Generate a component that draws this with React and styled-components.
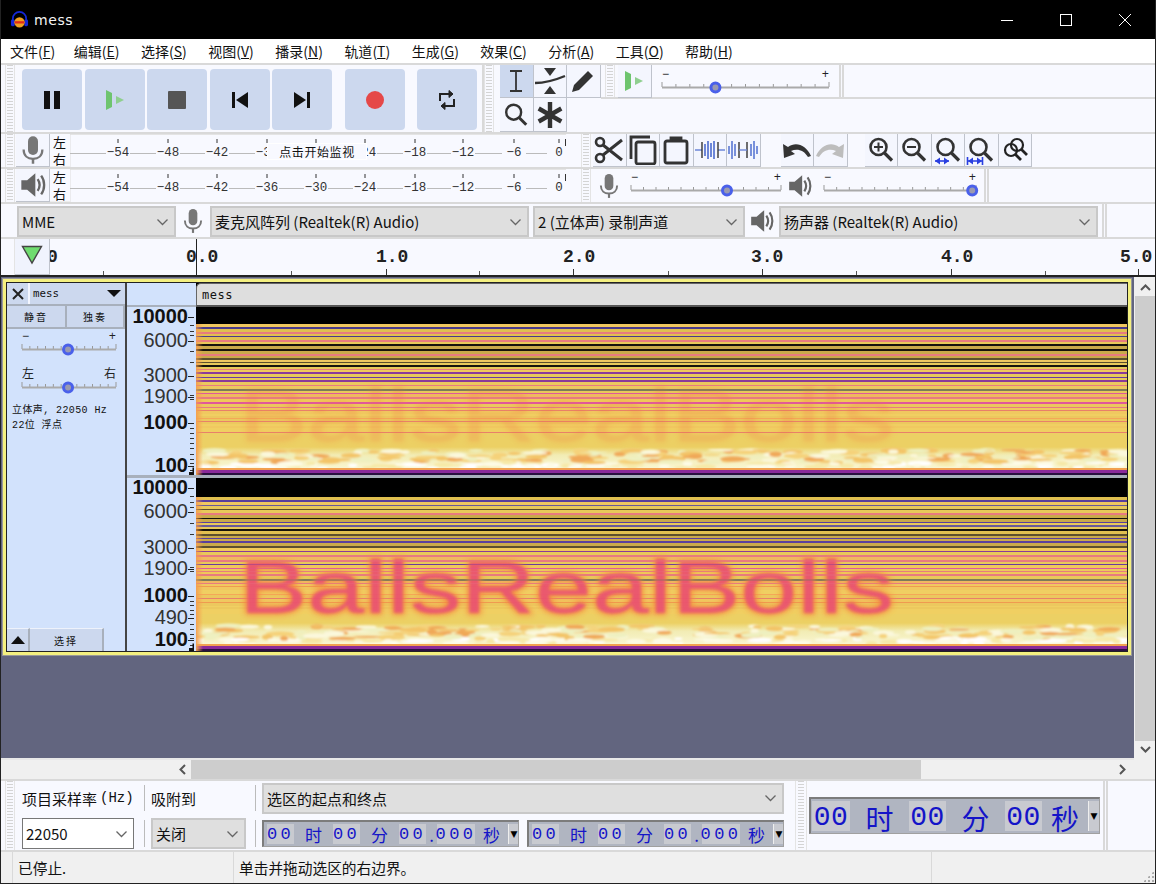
import React from 'react';
import styled, { createGlobalStyle } from 'styled-components';

const CJK = '"Noto Sans CJK SC", "Liberation Sans", sans-serif';
const MONO = '"Liberation Mono", "Noto Sans CJK SC", monospace';
const BAR = '#f8f9ff';
const LINE = '#d9d9d9';

const GlobalStyle = createGlobalStyle`
  html, body { margin: 0; padding: 0; background: #000; }
  * { box-sizing: border-box; }
  body { font-family: ${CJK}; color: #111; }
`;

const Frame = styled.div`
  width: 1156px;
  height: 884px;
  display: flex;
  flex-direction: column;
  border: 1px solid #222;
  border-top: 0;
  background: #f0f0f0;
  overflow: hidden;
`;
const TitleBar = styled.div`
  height: 39px;
  background: #000;
  color: #f4f4f4;
  display: flex;
  align-items: center;
  padding-left: 9px;
  font-size: 14px;
  letter-spacing: 0.6px;
  font-family: "DejaVu Sans", sans-serif;
  gap: 5px;
`;
const WinControls = styled.div`
  margin-left: auto;
  margin-right: 1px;
  display: flex;
  height: 100%;
`;
const WinButton = styled.div`
  width: 59px;
  display: flex;
  align-items: center;
  justify-content: center;
`;
const MenuBar = styled.div`
  height: 26px;
  background: #fff;
  border-bottom: 2px solid ${LINE};
  display: flex;
  align-items: center;
  gap: 21.5px;
  padding-left: 9px;
  font-size: 14px;
  line-height: 24px;
  & > span:first-child { margin-right: -3px; }
`;
const Mnemonic = styled.span`
  text-decoration: underline;
`;
const Row = styled.div`
  display: flex;
  height: ${p => p.$h}px;
  background: ${BAR};
  border-bottom: 2px solid ${LINE};
`;
const Gripper = styled.div`
  width: ${p => p.$w || 10}px;
  margin-left: ${p => p.$ml || 0}px;
  flex: none;
  border-left: 1px solid #e4e4e4;
  border-right: 1px solid #e4e4e4;
  background: repeating-linear-gradient(to bottom, #d4d4d4 0 1px, transparent 1px 3px) center / 6px 100% no-repeat;
`;
const Transport = styled.div`
  width: 469px;
  flex: none;
  display: flex;
  padding-left: 3px;
  gap: 2.5px;
  border-right: 2px solid ${LINE};
`;
const TransportButton = styled.div`
  width: 60px;
  height: 61px;
  flex: none;
  margin: 4px 0 0 ${p => p.$ml || 0}px;
  border-radius: 4px;
  background: #ccd8ee;
  display: flex;
  align-items: center;
  justify-content: center;
`;
const ToolGrid = styled.div`
  width: 100.5px;
  flex: none;
  display: grid;
  grid-template-columns: repeat(3, 33.5px);
  grid-template-rows: 33px 34px;
  margin-left: 6px;
`;
const ToolBtn = styled.div`
  width: ${p => p.$w || 33.5}px;
  height: ${p => p.$h || 33}px;
  flex: none;
  background: ${p => (p.$on ? '#ccd8ee' : '#f4f6fe')};
  border-right: 1px solid #bfc3cc;
  border-bottom: 1px solid #bfc3cc;
  display: flex;
  align-items: center;
  justify-content: center;
  margin-left: ${p => p.$ml || 0}px;
`;
const TopRight = styled.div`
  flex: 1;
  display: flex;
  flex-direction: column;
`;
const SpeedBar = styled.div`
  height: 34px;
  display: flex;
  border-bottom: 2px solid ${LINE};
  padding-left: 4px;
`;
const DoubleLine = styled.div`
  width: 5px;
  flex: none;
  border-left: 2px solid ${LINE};
  border-right: 2px solid ${LINE};
  margin-left: ${p => p.$ml || 0}px;
`;
const SliderSvg = styled.svg`
  display: block;
  flex: none;
  overflow: visible;
  margin: ${p => p.$m || '0'};
`;
const MeterBar = styled.div`
  width: 566px;
  flex: none;
  display: flex;
  padding-left: 1px;
  position: relative;
`;
const MeterMark = styled.div`
  width: 20px;
  flex: none;
  font-size: 13px;
  line-height: 16.5px;
  padding: 0 0 0 3px;
  border-bottom: 1px solid #eee;
`;
const Tooltip = styled.div`
  position: absolute;
  left: 252px;
  top: 9px;
  width: 100px;
  height: 17px;
  background: ${BAR};
  border: 1px solid #fff;
  font-size: 12px;
  line-height: 15px;
  text-align: center;
  letter-spacing: 0.6px;
`;
const IconSlot = styled.div`
  width: ${p => p.$w}px;
  flex: none;
  display: flex;
  align-items: center;
  justify-content: center;
  margin-left: ${p => p.$ml || 0}px;
`;
const DeviceSelect = styled.div`
  width: ${p => p.$w}px;
  height: ${p => p.$h || 31}px;
  flex: none;
  margin: ${p => p.$m || '2px 0 0 0'};
  background: ${p => (p.$white ? '#fff' : '#dfdfdf')};
  border: ${p => (p.$white ? '1px solid #777' : '2px solid #c8c8c8')};
  display: flex;
  align-items: center;
  justify-content: space-between;
  padding: 0 5px 0 3px;
  font-size: 15px;
  white-space: nowrap;
`;
const RulerRow = styled.div`
  height: 36px;
  display: flex;
  background: ${BAR};
`;
const RulerGutter = styled.div`
  width: 14px;
  flex: none;
  border-right: 1px solid #e4e4e4;
`;
const PlayHeadButton = styled.div`
  width: 35px;
  height: 36px;
  flex: none;
  background: #f0f3fd;
  border-right: 1px solid #bfc3cc;
  border-bottom: 1px solid #bfc3cc;
  display: flex;
  align-items: center;
  justify-content: center;
  padding-bottom: 3px;
`;
const TrackArea = styled.div`
  height: 485px;
  display: flex;
  border-top: 2px solid #222;
  flex: none;
`;
const TrackBackdrop = styled.div`
  width: 1133px;
  flex: none;
  background: #62657f;
  padding: 2px 0 0 2px;
  border-bottom: 2px solid #e8e8e8;
`;
const TrackFrame = styled.div`
  width: 1128px;
  height: 376px;
  border: 3px solid #f4f080;
  box-shadow: 0 0 0 1px #999;
  background: #222;
  padding: 1px;
  display: flex;
`;
const ControlPanel = styled.div`
  width: 120px;
  flex: none;
  background: #d2e2fc;
  border-right: 2px solid #444;
  display: flex;
  flex-direction: column;
`;
const PanelHead = styled.div`
  display: flex;
  height: 23px;
  flex: none;
  border-bottom: 2px solid #a8b0bc;
`;
const CloseBtn = styled.div`
  width: 23px;
  background: #ccd8ee;
  border-right: 2px solid #f4f6ff;
  display: flex;
  align-items: center;
  justify-content: center;
`;
const NameDrop = styled.div`
  flex: 1;
  background: #ccd8ee;
  font: 10.8px "DejaVu Sans Mono", monospace;
  padding: 0 3px 0 3px;
  display: flex;
  align-items: center;
  justify-content: space-between;
`;
const PanelBtnRow = styled.div`
  display: flex;
  height: 23px;
  flex: none;
  border-bottom: 2px solid #a8b0bc;
`;
const PanelBtn = styled.div`
  width: ${p => (p.$w ? `${p.$w}px` : 'auto')};
  flex: ${p => (p.$w ? 'none' : 1)};
  background: #ccd8ee;
  border-right: 2px solid #a8b0bc;
  font-size: 10px;
  display: flex;
  align-items: center;
  justify-content: center;
  letter-spacing: 2px;
`;
const InfoText = styled.div`
  font: 10px/15px ${MONO};
  letter-spacing: 0.4px;
  margin: 9px 0 0 5px;
  white-space: pre;
`;
const PanelFooter = styled.div`
  margin-top: auto;
  display: flex;
  height: 23px;
  flex: none;
`;
const FooterBtn = styled.div`
  width: ${p => p.$w}px;
  flex: none;
  background: #ccd8ee;
  border-top: 1px solid #eef2fb;
  border-right: 2px solid #a8b0bc;
  font-size: 10px;
  letter-spacing: 2px;
  display: flex;
  align-items: center;
  justify-content: center;
`;
const ScaleColumn = styled.div`
  width: 69px;
  flex: none;
  background: #d2e2fc;
  display: flex;
  flex-direction: column;
`;
const ScaleHead = styled.div`
  height: 24px;
  flex: none;
  border-bottom: 2px solid #a8b0bc;
`;
const ScaleGap = styled.div`
  height: 3px;
  flex: none;
  background: #a8b0bc;
`;
const WaveColumn = styled.div`
  flex: 1;
  min-width: 0;
  display: flex;
  flex-direction: column;
  background: #000;
`;
const WaveTitle = styled.div`
  height: 24px;
  flex: none;
  background: #dedede;
  border-radius: 5px 0 0 0;
  border-top: 1px solid #666;
  border-left: 1px solid #666;
  border-bottom: 2px solid #555;
  font: 12px "DejaVu Sans Mono", monospace;
  letter-spacing: 0.5px;
  padding: 4px 0 0 5px;
`;
const Ghost = styled.g`
  opacity: ${p => p.$a};
`;
const VScroll = styled.div`
  flex: 1;
  background: #f0f0f0;
  display: flex;
  flex-direction: column;
  align-items: center;
  padding: 2px 1px;
`;
const ScrollThumb = styled.div`
  background: #cdcdcd;
  flex: ${p => (p.$w ? 'none' : 1)};
  width: ${p => (p.$w ? `${p.$w}px` : '100%')};
  height: ${p => (p.$w ? '100%' : 'auto')};
`;
const ScrollArrow = styled.div`
  width: ${p => p.$w || 20}px;
  height: ${p => p.$h || 17}px;
  flex: none;
  display: flex;
  align-items: center;
  justify-content: center;
`;
const HScroll = styled.div`
  height: 21px;
  flex: none;
  background: #f0f0f0;
  display: flex;
  padding-left: 172px;
  border-bottom: 2px solid ${LINE};
`;
const HSpacer = styled.div`
  flex: 1;
`;
const SelectionBar = styled.div`
  height: 71px;
  flex: none;
  background: ${BAR};
  border-bottom: 2px solid ${LINE};
  display: flex;
`;
const SelectionGrid = styled.div`
  display: grid;
  grid-template-columns: 122px 111px 530px;
  grid-template-rows: 32px 33px;
  row-gap: 3px;
  margin-left: 7px;
  padding-top: 1px;
  flex: none;
`;
const SelCell = styled.div`
  display: flex;
  align-items: center;
  font-size: 15px;
  white-space: nowrap;
  position: relative;
  padding-left: ${p => p.$pad || 0}px;
`;
const HzMark = styled.span`
  font: 14px ${MONO};
  margin-left: 3px;
`;
const SelDivider = styled.div`
  position: absolute;
  left: 0;
  top: 3px;
  bottom: 3px;
  border-left: 1px solid #bbb;
`;
const TimeBox = styled.div`
  width: ${p => p.$w}px;
  height: ${p => p.$h}px;
  flex: none;
  margin-left: ${p => p.$ml || 0}px;
  background: #b0b5c1;
  border: 1px solid #a0a0a0;
  border-top: 2px solid #7c7c7c;
  border-left: 2px solid #7c7c7c;
  display: flex;
  align-items: center;
  color: #1414c8;
  font-family: ${MONO};
  font-size: ${p => p.$fs}px;
  padding: 2px 0;
  overflow: hidden;
`;
const TimeDigits = styled.span`
  width: ${p => p.$w}px;
  height: 100%;
  flex: none;
  background: #c8cad0;
  display: flex;
  align-items: center;
  justify-content: center;
  padding-top: ${p => p.$dy || 0}px;
  letter-spacing: ${p => p.$ls ?? 3.4}px;
`;
const TimeUnit = styled.span`
  width: ${p => p.$w}px;
  flex: none;
  text-align: center;
  padding-top: ${p => p.$dy || 0}px;
  font-family: ${CJK};
`;
const TimeMenu = styled.span`
  margin-left: auto;
  width: 11px;
  height: 100%;
  flex: none;
  background: #c8cad0;
  border-left: 1px solid #eee;
  display: flex;
  align-items: center;
  justify-content: center;
  color: #000;
  font-size: 9px;
  font-family: "DejaVu Sans", sans-serif;
`;
const ClockHolder = styled.div`
  width: 296px;
  flex: none;
  display: flex;
  align-items: center;
  padding: 0 0 0 2px;
`;
const StatusBar = styled.div`
  flex: 1;
  display: flex;
  font-size: 14.7px;
  position: relative;
`;
const StatusCell = styled.div`
  width: ${p => p.$w}px;
  flex: none;
  margin-left: ${p => p.$ml || 0}px;
  border-left: 1px solid ${LINE};
  padding: 5px 0 0 ${p => p.$pad || 5}px;
  white-space: nowrap;
`;
const Resize = styled.div`
  position: absolute;
  right: 1px;
  bottom: 1px;
  width: 11px;
  height: 11px;
  background: radial-gradient(circle, #aaa 1.2px, transparent 1.4px) 0 0 / 4px 4px;
  clip-path: polygon(100% 0, 100% 100%, 0 100%);
`;

// --- small drawings ---
const Mic = ({ s = 30, c = '#777' }) => (
  <svg width={s} height={s} viewBox="0 0 24 24" fill="none">
    <rect x="8" y="1" width="8" height="15" rx="4" fill={c} />
    <path d="M4.5 11.5c0 5 3.2 7.5 7.5 7.5s7.5-2.5 7.5-7.5" stroke={c} strokeWidth="1.8" />
    <path d="M12 19v4" stroke={c} strokeWidth="2" />
  </svg>
);
const Speaker = ({ s = 28, c = '#666' }) => (
  <svg width={s} height={s} viewBox="0 0 24 24" fill="none">
    <path d="M2 8h5l7-6v20l-7-6H2z" fill={c} />
    <path d="M16 7c2 3 2 7 0 10" stroke={c} strokeWidth="2" />
    <path d="M19 4c3.4 4.6 3.4 11.4 0 16" stroke={c} strokeWidth="2" />
  </svg>
);
const GreenPlay = () => (
  <svg width="24" height="24" viewBox="0 0 24 24">
    <path d="M3 2l6 3v14l-6 3z" fill="#6ec46e" />
    <path d="M13 8l8 4-8 4z" fill="#8fcf8f" />
  </svg>
);
const Magnifier = ({ children, s = 30, w = 2.6 }) => (
  <svg width={s} height={s} viewBox="0 0 30 30" fill="none" stroke="#333" strokeWidth={w}>
    <circle cx="12.5" cy="12" r="8" />
    <path d="M18.5 18l7.5 7.5" strokeWidth={w + 0.6} />
    {children}
  </svg>
);

const Slider = ({ w, pos, lo = '−', hi = '+', h = 28, m, font = MONO }) => {
  const x = 4 + (w - 8) * pos;
  const ticks = Array.from({ length: 13 }, (_, i) => 4 + ((w - 8) * i) / 12);
  return (
    <SliderSvg width={w} height={h} viewBox={`0 0 ${w} ${h}`} $m={m}>
      <text x="4" y="12" fontSize="12" fontFamily={font} fill="#222">{lo}</text>
      <text x={w - 4} y="12" fontSize="12" fontFamily={font} fill="#222" textAnchor="end">{hi}</text>
      {ticks.map((t, i) => (
        <line key={i} x1={t} x2={t} y1={i === 0 || i === 12 ? 16 : 18} y2="21" stroke="#999" />
      ))}
      <line x1="4" x2={w - 4} y1="21.5" y2="21.5" stroke="#aaa" strokeWidth="2" />
      <circle cx={x} cy="21.5" r="4.5" fill="#9a9ab0" stroke="#4a60ea" strokeWidth="3" />
    </SliderSvg>
  );
};

const METER_TICKS = [
  ['−54', 48], ['−48', 98], ['−42', 147], ['−36', 197], ['−30', 246],
  ['−24', 295], ['−18', 345], ['−12', 393], ['−6', 444], ['0', 489],
];
const MeterScale = () => (
  <svg width="497" height="33" viewBox="0 0 497 33">
    <line x1="0" x2="496" y1="0.5" y2="0.5" stroke="#e4e4e4" />
    <line x1="0" x2="0" y1="0" y2="33" stroke="#ddd" />
    <line x1="0" x2="496" y1="19.5" y2="19.5" stroke="#bbb" />
    {METER_TICKS.map(([t, x]) => (
      <g key={t}>
        <rect x={x - 12} y="8" width="24" height="17" fill={BAR} />
        <line x1={x} x2={x} y1="5" y2="9" stroke="#333" />
        <text x={x} y="22" fontSize="12.5" fontFamily={MONO} textAnchor="middle" fill="#333">{t}</text>
      </g>
    ))}
    <line x1="495.5" x2="495.5" y1="5" y2="12" stroke="#333" />
  </svg>
);

// --- spectrogram ---
const rng = seed => () => {
  seed = (seed + 0x6d2b79f5) | 0;
  let t = Math.imul(seed ^ (seed >>> 15), 1 | seed);
  t = (t + Math.imul(t ^ (t >>> 7), 61 | t)) ^ t;
  return ((t ^ (t >>> 14)) >>> 0) / 4294967296;
};
const BANDS = [
  { light: ['#e8c95a', '#c9a94a', '#e0c050', '#f0c860'], accent: ['#5c4f2e', '#5a3f9e', '#17140c', '#17140c', '#6a5a9a', '#e87a80', '#4a3a8c'] },
  { light: ['#f0c85a', '#ecc85e', '#f0b860', '#e8c95a'], accent: ['#e87a80', '#8a3a9a', '#c8488a', '#7f7a5a', '#e0589a', '#6a3aa0'] },
  { light: ['#f0cf62', '#ecc85e', '#f0c860'], accent: ['#f4a858', '#f09a50', '#e8806a', '#f0cf62'] },
];
const pick = (r, list) => list[Math.floor(r() * list.length)];

const makeStripes = (seed, top, end) => {
  const r = rng(seed);
  const out = [];
  let y = top;
  while (y < end) {
    const t = (y - top) / (end - top);
    const band = BANDS[t < 0.42 ? 0 : t < 0.74 ? 1 : 2];
    const a = 2 + Math.floor(r() * 2);
    const b = 1 + Math.floor(r() * 2);
    out.push({ y, h: a, c: pick(r, band.light) });
    out.push({ y: y + a, h: b, c: pick(r, band.accent), accent: t < 0.74 });
    y += a + b;
  }
  return out;
};

const makeBlobs = (seed, top, bottom) => {
  const r = rng(seed);
  return Array.from({ length: 320 }, () => {
    const y = top + r() * (bottom - top);
    const low = (y - top) / (bottom - top);
    return {
      x: r() * 931,
      y,
      rx: 4 + r() * 10,
      ry: 1 + r() * 1.8,
      c: low > 0.7 ? pick(r, ['#ffffff', '#fdfbe6', '#f6e9a8']) : pick(r, ['#f3c468', '#f5d27a', '#fbf8dc', '#eef0c0', '#f0a858']),
    };
  });
};

const Channel = ({ id, h, top, end, mottle, ghost, baseline, core }) => {
  const stripes = makeStripes(id * 97 + 5, top, end);
  const blobs = makeBlobs(id * 31 + 2, mottle + 3, h - 7);
  return (
    <svg width="931" height={h} viewBox={`0 0 931 ${h}`}>
      <defs>
        <filter id={`soft${id}`}><feGaussianBlur stdDeviation="1.4" /></filter>
        <filter id={`glow${id}`}><feGaussianBlur stdDeviation="3.4" /></filter>
        <filter id={`mot${id}`}><feGaussianBlur stdDeviation="0.8" /></filter>
        <linearGradient id={`base${id}`} x1="0" x2="0" y1="0" y2="1">
          <stop offset="0" stopColor="#ecd064" />
          <stop offset="0.35" stopColor="#f2ecb4" />
          <stop offset="1" stopColor="#faf7d4" />
        </linearGradient>
        <linearGradient id={`edge${id}`} x1="0" x2="1" y1="0" y2="0">
          <stop offset="0" stopColor="#f4a050" />
          <stop offset="1" stopColor="#f4a050" stopOpacity="0" />
        </linearGradient>
      </defs>
      <rect width="931" height={h} fill="#000" />
      <rect y={top} width="931" height={h - top} fill="#ecd064" />
      {stripes.map((s, i) => <rect key={i} y={s.y} width="931" height={s.h} fill={s.c} />)}
      <rect y={mottle} width="931" height={h - mottle - 5} fill={`url(#base${id})`} />
      <g filter={`url(#mot${id})`}>
        {blobs.map((b, i) => <ellipse key={i} cx={b.x} cy={b.y} rx={b.rx} ry={b.ry} fill={b.c} />)}
      </g>
      <rect y={h - 7} width="931" height="2" fill="#f2a050" />
      <rect y={h - 5} width="931" height="3" fill="#8a2a9a" />
      <rect y={h - 2} width="931" height="2" fill="#2a1040" />
      <rect y={top} width="7" height={h - top} fill={`url(#edge${id})`} />
      <Ghost $a={ghost}>
        <text x="43" y={baseline} fontFamily="Liberation Sans, sans-serif" fontSize="75" textLength="655"
          lengthAdjust="spacingAndGlyphs" fill="#f58a3c" stroke="#f58a3c" strokeWidth="3" filter={`url(#glow${id})`}>
          BallsRealBolls
        </text>
        <text x="43" y={baseline} fontFamily="Liberation Sans, sans-serif" fontSize="75" textLength="655"
          lengthAdjust="spacingAndGlyphs" fill={core} filter={`url(#soft${id})`} opacity="0.85">
          BallsRealBolls
        </text>
      </Ghost>
      {stripes.filter(s => s.accent).map((s, i) => (
        <rect key={i} y={s.y} width="931" height={s.h} fill={s.c} opacity="0.3" />
      ))}
    </svg>
  );
};

const FreqScale = ({ h, labels, ticks }) => (
  <svg width="67" height={h} viewBox={`0 0 67 ${h}`}>
    {labels.map(([t, y, b]) => (
      <g key={t}>
        <text x="61" y={y + 5.5} textAnchor="end" fontSize="20" fontWeight={b ? 700 : 400}
          fontFamily="Liberation Sans, sans-serif" fill={b ? '#111' : '#333'}>{t}</text>
        <line x1="61" x2="67" y1={y + 0.5} y2={y + 0.5} stroke="#222" />
      </g>
    ))}
    {ticks.map(y => <line key={y} x1="63" x2="67" y1={y + 0.5} y2={y + 0.5} stroke="#333" />)}
    <path d={`M62 ${h - 1.5}h5v-6`} stroke="#111" strokeWidth="3" fill="none" />
  </svg>
);

const Caret = ({ c = '#666' }) => (
  <svg width="13" height="8" viewBox="0 0 13 8" fill="none">
    <path d="M1.5 1.5l5 5 5-5" stroke={c} strokeWidth="1.3" />
  </svg>
);

const MENUS = [
  ['文件', 'F'], ['编辑', 'E'], ['选择', 'S'], ['视图', 'V'], ['播录', 'N'], ['轨道', 'T'],
  ['生成', 'G'], ['效果', 'C'], ['分析', 'A'], ['工具', 'O'], ['帮助', 'H'],
];

const RULER = [
  ['0', -3], ['0.0', 136], ['1.0', 326], ['2.0', 513], ['3.0', 701], ['4.0', 891], ['5.0', 1070],
];

const Time = ({ w, h, fs, parts, ml, dy }) => (
  <TimeBox $w={w} $h={h} $fs={fs} $ml={ml}>
    {parts.map((p, i) => (p.d
      ? <TimeDigits key={i} $w={p.w} $ls={p.ls} $dy={dy}>{p.d}</TimeDigits>
      : <TimeUnit key={i} $w={p.w} $dy={dy}>{p.u}</TimeUnit>))}
    <TimeMenu>▼</TimeMenu>
  </TimeBox>
);

const SMALL_TIME = [
  { u: '', w: 3 }, { d: '00', w: 27 }, { u: '时', w: 39 }, { d: '00', w: 27 }, { u: '分', w: 39 },
  { d: '00', w: 27 }, { u: '.', w: 11 }, { d: '000', w: 38 }, { u: '秒', w: 33 },
];
const BIG_TIME = [
  { u: '', w: 1 }, { d: '00', w: 38, ls: 0.5 }, { u: '时', w: 59 }, { d: '00', w: 37, ls: 0.5 },
  { u: '分', w: 59 }, { d: '00', w: 37, ls: 0.5 }, { u: '秒', w: 46 },
];

export default function App() {
  return (
    <>
      <GlobalStyle />
      <Frame>
        <TitleBar>
          <svg width="19" height="19" viewBox="0 0 20 20" fill="none">
            <path d="M3 12V9a7 7 0 0114 0v3" stroke="#1428d8" strokeWidth="1.8" />
            <rect x="1" y="10" width="4" height="7" rx="1.5" fill="#1428d8" />
            <rect x="15" y="10" width="4" height="7" rx="1.5" fill="#1428d8" />
            <circle cx="10" cy="13" r="5.5" fill="#f0a020" />
            <path d="M5 13h10" stroke="#e02818" strokeWidth="2.4" />
          </svg>
          mess
          <WinControls>
            <WinButton>
              <svg width="12" height="12"><path d="M0 6.5h12" stroke="#fff" /></svg>
            </WinButton>
            <WinButton>
              <svg width="12" height="12"><rect x="0.5" y="0.5" width="11" height="11" fill="none" stroke="#fff" /></svg>
            </WinButton>
            <WinButton>
              <svg width="12" height="12"><path d="M0 0l12 12M12 0L0 12" stroke="#fff" /></svg>
            </WinButton>
          </WinControls>
        </TitleBar>

        <MenuBar>
          {MENUS.map(([label, key]) => (
            <span key={key}>{label}(<Mnemonic>{key}</Mnemonic>)</span>
          ))}
        </MenuBar>

        <Row $h={69}>
          <Gripper $ml={4} />
          <Transport>
            <TransportButton $ml={4}>
              <svg width="20" height="20"><path d="M2 1h6v18H2zM12 1h6v18h-6z" fill="#111" /></svg>
            </TransportButton>
            <TransportButton><GreenPlay /></TransportButton>
            <TransportButton>
              <svg width="18" height="18"><rect width="18" height="18" fill="#555" rx="1" /></svg>
            </TransportButton>
            <TransportButton>
              <svg width="18" height="18"><path d="M1 1h3v16H1zM17 1v16L5 9z" fill="#111" /></svg>
            </TransportButton>
            <TransportButton>
              <svg width="18" height="18"><path d="M14 1h3v16h-3zM1 1v16l12-8z" fill="#111" /></svg>
            </TransportButton>
            <TransportButton $ml={10.5}>
              <svg width="18" height="18"><circle cx="9" cy="9" r="9" fill="#e54848" /></svg>
            </TransportButton>
            <TransportButton $ml={9.5}>
              <svg width="20" height="22" viewBox="0 0 20 22" fill="none" stroke="#222" strokeWidth="2">
                <path d="M3 12V5h12" /><path d="M17 10v7H5" />
                <path d="M12 1.5L16 5l-4 3.5z" fill="#222" strokeWidth="1" />
                <path d="M8 13.5L4 17l4 3.5z" fill="#222" strokeWidth="1" />
              </svg>
            </TransportButton>
          </Transport>
          <Gripper />
          <ToolGrid>
            <ToolBtn $on>
              <svg width="16" height="24" fill="none" stroke="#333" strokeWidth="1.8"><path d="M2 2h12M8 2v20M2 22h12" /></svg>
            </ToolBtn>
            <ToolBtn>
              <svg width="32" height="28" viewBox="0 0 32 28">
                <path d="M10 1h12l-6 8zM10 27h12l-6-8z" fill="#333" />
                <path d="M1 16c10 0 18-2 30-7" stroke="#333" strokeWidth="2.4" fill="none" />
              </svg>
            </ToolBtn>
            <ToolBtn>
              <svg width="26" height="26" viewBox="0 0 26 26">
                <path d="M2 24l2-7L18 3l5 5L9 22z" fill="#333" />
              </svg>
            </ToolBtn>
            <ToolBtn $h={34}><Magnifier s={28} /></ToolBtn>
            <ToolBtn $h={34}>
              <svg width="28" height="28" viewBox="0 0 28 28" stroke="#333" strokeWidth="4.4">
                <path d="M14 1v26M2.7 7.5l22.6 13M2.7 20.5l22.6-13" />
              </svg>
            </ToolBtn>
          </ToolGrid>
          <TopRight>
            <SpeedBar>
              <Gripper />
              <ToolBtn $w={34} $ml={3}><GreenPlay /></ToolBtn>
              <Slider w={175} pos={0.32} m="1px 0 0 6px" />
              <DoubleLine $ml={6} />
            </SpeedBar>
          </TopRight>
        </Row>

        <Row $h={35}>
          <Gripper $ml={4} />
          <MeterBar>
            <ToolBtn $w={34} $h={33}><Mic /></ToolBtn>
            <MeterMark>左<br />右</MeterMark>
            <MeterScale />
            <Tooltip>点击开始监视</Tooltip>
          </MeterBar>
          <Gripper />
          <ToolBtn $ml={2}>
            <svg width="30" height="30" viewBox="0 0 30 30" fill="none" stroke="#333" strokeWidth="2.6">
              <circle cx="6" cy="7" r="4" /><circle cx="6" cy="23" r="4" />
              <path d="M9 10l19 15M9 20L28 5" strokeWidth="3" />
            </svg>
          </ToolBtn>
          <ToolBtn>
            <svg width="28" height="30" viewBox="0 0 28 30" fill="none" stroke="#333" strokeWidth="2.8">
              <path d="M21 2H2v22" /><rect x="7" y="7" width="19" height="22" rx="2" />
            </svg>
          </ToolBtn>
          <ToolBtn>
            <svg width="26" height="30" viewBox="0 0 26 30" fill="none" stroke="#333" strokeWidth="2.8">
              <rect x="2" y="6" width="22" height="22" rx="2" />
              <path d="M8 7V3h10v4" fill="#333" />
            </svg>
          </ToolBtn>
          <ToolBtn>
            <svg width="30" height="24" viewBox="0 0 30 24" fill="none" strokeWidth="1.4" stroke="#6c86d8">
              <path d="M0 12h7M23 12h7" />
              <path d="M7 4v16" stroke="#333" /><path d="M23 4v16" stroke="#333" />
              <path d="M10 6v12M13 3v18M16 5v14M19 3v18" strokeWidth="2" />
            </svg>
          </ToolBtn>
          <ToolBtn>
            <svg width="30" height="24" viewBox="0 0 30 24" fill="none" strokeWidth="1.4" stroke="#6c86d8">
              <path d="M1 8v8M4 3v18M7 6v12M23 6v12M26 3v18M29 8v8" strokeWidth="1.8" />
              <path d="M11 4v16M19 4v16" stroke="#333" />
              <path d="M11 12h8" />
            </svg>
          </ToolBtn>
          <ToolBtn $ml={20}>
            <svg width="30" height="20" viewBox="0 0 30 20"><path d="M1 4l1 14 11-4-4-3c6-3 13-1 17 6l3-1C24 5 14 1 6 7z" fill="#333" /></svg>
          </ToolBtn>
          <ToolBtn>
            <svg width="30" height="20" viewBox="0 0 30 20"><path d="M29 4l-1 14-11-4 4-3C15 8 8 10 4 17l-3-1C6 5 16 1 24 7z" fill="#bdbdbd" /></svg>
          </ToolBtn>
          <ToolBtn $ml={17}>
            <Magnifier><path d="M12.5 7.5v9M8 12h9" strokeWidth="2" /></Magnifier>
          </ToolBtn>
          <ToolBtn><Magnifier><path d="M8 12h9" strokeWidth="2" /></Magnifier></ToolBtn>
          <ToolBtn>
            <Magnifier><path d="M2 26h14" stroke="#2a3fe0" strokeWidth="1.6" /><path d="M2 26l5-3.5v7zM16 26l-5-3.5v7z" fill="#2a3fe0" stroke="none" /></Magnifier>
          </ToolBtn>
          <ToolBtn>
            <Magnifier><path d="M2 26h14M1.5 22v8M16.5 22v8" stroke="#2a3fe0" strokeWidth="1.6" /><path d="M2 26l5-3.5v7zM16 26l-5-3.5v7z" fill="#2a3fe0" stroke="none" /></Magnifier>
          </ToolBtn>
          <ToolBtn>
            <svg width="30" height="30" viewBox="0 0 30 30" fill="none" stroke="#222" strokeWidth="2.2">
              <circle cx="11" cy="15" r="6" /><circle cx="17" cy="10" r="6" />
              <path d="M15 19l6 6M21 14l6 6" strokeWidth="2.8" />
            </svg>
          </ToolBtn>
        </Row>

        <Row $h={35}>
          <Gripper $ml={4} />
          <MeterBar>
            <ToolBtn $w={34} $h={33}><Speaker /></ToolBtn>
            <MeterMark>左<br />右</MeterMark>
            <MeterScale />
          </MeterBar>
          <Gripper />
          <IconSlot $w={36}><Mic s={26} /></IconSlot>
          <Slider w={158} pos={0.64} m="0" />
          <IconSlot $w={30}><Speaker s={26} /></IconSlot>
          <Slider w={160} pos={0.975} m="0 0 0 5px" />
          <DoubleLine $ml={4} />
        </Row>

        <Row $h={35}>
          <DeviceSelect $w={159} $m="2px 0 0 16px">MME<Caret /></DeviceSelect>
          <IconSlot $w={34}><Mic s={26} /></IconSlot>
          <DeviceSelect $w={319}>麦克风阵列 (Realtek(R) Audio)<Caret /></DeviceSelect>
          <DeviceSelect $w={212} $m="2px 0 0 4px">2 (立体声) 录制声道<Caret /></DeviceSelect>
          <IconSlot $w={34}><Speaker s={26} /></IconSlot>
          <DeviceSelect $w={319}>扬声器 (Realtek(R) Audio)<Caret /></DeviceSelect>
          <DoubleLine $ml={4} />
        </Row>

        <RulerRow>
          <RulerGutter />
          <PlayHeadButton>
            <svg width="22" height="20" viewBox="0 0 22 20">
              <path d="M1.5 1.5h19L11 18z" fill="#6fdc6f" stroke="#444" strokeWidth="1.4" />
            </svg>
          </PlayHeadButton>
          <svg width="1105" height="36" viewBox="0 0 1105 36">
            {RULER.map(([t, x]) => (
              <text key={t} x={x} y="23" fontFamily={MONO} fontWeight="700" fontSize="18" fill="#222">{t}</text>
            ))}
            {[147, 337, 524, 713, 902, 1089].map(x => (
              <line key={x} x1={x - 0.5} x2={x - 0.5} y1="30" y2="36" stroke="#333" />
            ))}
            {[54, 242, 430, 619, 807, 996].map(x => (
              <line key={x} x1={x - 0.5} x2={x - 0.5} y1="32" y2="36" stroke="#555" />
            ))}
            <line x1="146.5" x2="146.5" y1="0" y2="36" stroke="#222" />
          </svg>
        </RulerRow>

        <TrackArea>
          <TrackBackdrop>
            <TrackFrame>
              <ControlPanel>
                <PanelHead>
                  <CloseBtn>
                    <svg width="12" height="12"><path d="M1 1l10 10M11 1L1 11" stroke="#222" strokeWidth="2" /></svg>
                  </CloseBtn>
                  <NameDrop>
                    mess
                    <svg width="16" height="9"><path d="M1 1h14L8 8z" fill="#111" /></svg>
                  </NameDrop>
                </PanelHead>
                <PanelBtnRow>
                  <PanelBtn $w={60}>静音</PanelBtn>
                  <PanelBtn>独奏</PanelBtn>
                </PanelBtnRow>
                <Slider w={102} pos={0.49} m="-1px 0 0 11px" />
                <Slider w={102} pos={0.49} lo="左" hi="右" m="10px 0 0 11px" font={CJK} />
                <InfoText>立体声, 22050 Hz{'\n'}22位 浮点</InfoText>
                <PanelFooter>
                  <FooterBtn $w={23}>
                    <svg width="14" height="8"><path d="M0 8L7 0l7 8z" fill="#111" /></svg>
                  </FooterBtn>
                  <FooterBtn $w={74}>选择</FooterBtn>
                </PanelFooter>
              </ControlPanel>
              <ScaleColumn>
                <ScaleHead />
                <FreqScale
                  h={168}
                  labels={[['10000', 10, 1], ['6000', 34], ['3000', 69], ['1900', 90], ['1000', 116, 1], ['100', 159, 1]]}
                  ticks={[18, 24, 28, 44, 55, 88, 92, 121, 126, 131, 136, 141, 147, 152, 156, 163]}
                />
                <ScaleGap />
                <FreqScale
                  h={173}
                  labels={[['10000', 10, 1], ['6000', 34], ['3000', 70], ['1900', 91], ['1000', 118, 1], ['490', 140], ['100', 162, 1]]}
                  ticks={[18, 24, 29, 45, 56, 89, 93, 123, 127, 132, 136, 146, 151, 156, 160, 167]}
                />
              </ScaleColumn>
              <WaveColumn>
                <WaveTitle>mess</WaveTitle>
                <Channel id={1} h={168} top={17} end={126} mottle={140} ghost={0.2} baseline={134} core="#f06a40" />
                <ScaleGap />
                <Channel id={2} h={173} top={19} end={134} mottle={145} ghost={0.95} baseline={135} core="#e84a78" />
              </WaveColumn>
            </TrackFrame>
          </TrackBackdrop>
          <VScroll>
            <ScrollArrow>
              <svg width="11" height="7"><path d="M1 6l4.5-4.5L10 6" stroke="#555" strokeWidth="2" fill="none" /></svg>
            </ScrollArrow>
            <ScrollThumb />
            <ScrollArrow>
              <svg width="11" height="7"><path d="M1 1l4.5 4.5L10 1" stroke="#555" strokeWidth="2" fill="none" /></svg>
            </ScrollArrow>
          </VScroll>
        </TrackArea>

        <HScroll>
          <ScrollArrow $w={18} $h={19}>
            <svg width="7" height="11"><path d="M6 1L1.5 5.5 6 10" stroke="#555" strokeWidth="2" fill="none" /></svg>
          </ScrollArrow>
          <ScrollThumb $w={730} />
          <HSpacer />
          <ScrollArrow $w={22} $h={19}>
            <svg width="7" height="11"><path d="M1 1l4.5 4.5L1 10" stroke="#555" strokeWidth="2" fill="none" /></svg>
          </ScrollArrow>
          <ScrollArrow $w={22} $h={19} />
        </HScroll>

        <SelectionBar>
          <Gripper $ml={4} />
          <SelectionGrid>
            <SelCell>项目采样率<HzMark>(Hz)</HzMark></SelCell>
            <SelCell $pad={7}><SelDivider />吸附到</SelCell>
            <SelCell $pad={7}>
              <SelDivider />
              <DeviceSelect $w={522} $m="0">选区的起点和终点<Caret /></DeviceSelect>
            </SelCell>
            <SelCell>
              <DeviceSelect $white $w={112} $m="0">22050<Caret /></DeviceSelect>
            </SelCell>
            <SelCell $pad={7}>
              <SelDivider />
              <DeviceSelect $w={95} $m="0">关闭<Caret /></DeviceSelect>
            </SelCell>
            <SelCell $pad={7}>
              <SelDivider />
              <Time w={257} h={27} fs={17} parts={SMALL_TIME} />
              <Time w={257} h={27} fs={17} parts={SMALL_TIME} ml={8} />
            </SelCell>
          </SelectionGrid>
          <Gripper $w={12} $ml={10} />
          <ClockHolder>
            <Time w={291} h={37} fs={28} parts={BIG_TIME} dy={3} />
          </ClockHolder>
          <DoubleLine />
        </SelectionBar>

        <StatusBar>
          <StatusCell $w={221} $ml={11}>已停止.</StatusCell>
          <StatusCell $w={698}>单击并拖动选区的右边界。</StatusCell>
          <StatusCell $w={220} />
          <Resize />
        </StatusBar>
      </Frame>
    </>
  );
}
